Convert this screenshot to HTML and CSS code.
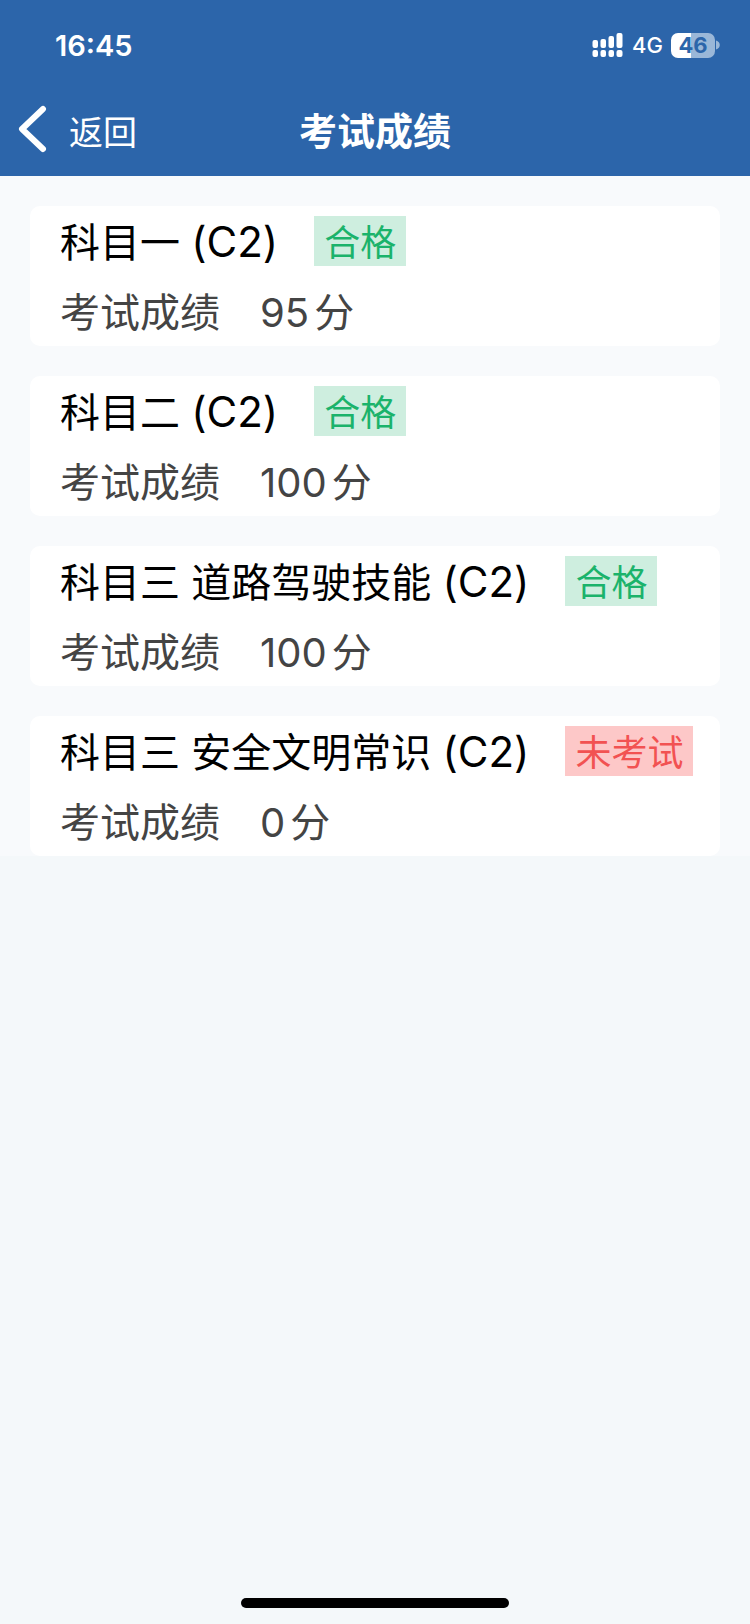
FILE: index.html
```
<!DOCTYPE html>
<html lang="zh-CN">
<head>
    <meta charset="UTF-8">
    <meta name="viewport" content="width=device-width, initial-scale=1.0">
    <title>考试成绩</title>
    <link rel="stylesheet" href="styles.css">
</head>
<body>

    <header class="header">
        <div class="status-bar">
            <span class="time">16:45</span>
            <div class="status-icons">
                <svg class="signal" width="32" height="26" viewBox="0 0 32 26" fill="#fff">
                    <rect x="0.5" y="8" width="5.500" height="8" rx="2"/>
                    <rect x="8.500" y="7" width="5.500" height="9" rx="2"/>
                    <rect x="16.500" y="4" width="5.500" height="12" rx="2"/>
                    <rect x="24.500" y="1" width="6" height="15" rx="2"/>
                    <rect x="0.5" y="18" width="5.500" height="7" rx="2"/>
                    <rect x="8.500" y="18" width="5.500" height="7" rx="2"/>
                    <rect x="16.500" y="18" width="5.500" height="7" rx="2"/>
                    <rect x="24.500" y="18" width="6" height="7" rx="2"/>
                </svg>
                <span class="network">4G</span>
                <div class="battery">
                    <span class="battery-level">46</span>
                    <svg width="4" height="10" viewBox="0 0 4 10" fill="#9ab7d8">
                        <path d="M0 0.5C5 2 5 8 0 9.5z"/>
                    </svg>
                </div>
            </div>
        </div>
        <nav class="nav-bar">
            <button class="back-button" type="button">
                <svg class="back-icon" width="30" height="48" viewBox="0 0 30 48" fill="none" stroke="#fff" stroke-width="6" stroke-linecap="round" stroke-linejoin="round">
                    <path d="M25 4L4 24L25 44"/>
                </svg>
                <span>返回</span>
            </button>
            <h1 class="title">考试成绩</h1>
        </nav>
    </header>

    <main class="score-list">
        <section class="card">
            <div class="card-head">
                <h2 class="subject">科目一 <span class="license">(C2)</span></h2>
                <span class="tag tag-pass">合格</span>
            </div>
            <p class="score"><span>考试成绩</span><span class="value"><span>95</span><span>分</span></span></p>
        </section>

        <section class="card">
            <div class="card-head">
                <h2 class="subject">科目二 <span class="license">(C2)</span></h2>
                <span class="tag tag-pass">合格</span>
            </div>
            <p class="score"><span>考试成绩</span><span class="value"><span>100</span><span>分</span></span></p>
        </section>

        <section class="card">
            <div class="card-head">
                <h2 class="subject">科目三 道路驾驶技能 <span class="license">(C2)</span></h2>
                <span class="tag tag-pass">合格</span>
            </div>
            <p class="score"><span>考试成绩</span><span class="value"><span>100</span><span>分</span></span></p>
        </section>

        <section class="card">
            <div class="card-head">
                <h2 class="subject">科目三 安全文明常识 <span class="license">(C2)</span></h2>
                <span class="tag tag-none">未考试</span>
            </div>
            <p class="score"><span>考试成绩</span><span class="value"><span>0</span><span>分</span></span></p>
        </section>
    </main>

    <div class="home-indicator"></div>

</body>
</html>
```

FILE: styles.css
```
* {
    box-sizing: border-box;
}
body {
    margin: 0;
    min-height: 100vh;
    display: flex;
    flex-direction: column;
    background-color: #f4f8fa;
    color: #000;
    font-family: Inter, "Noto Sans CJK SC", sans-serif;
}
.header {
    background-color: #2c65aa;
    color: #fff;
}

/* Status bar */
.status-bar {
    height: 90px;
    padding: 0 30px 0 55px;
    display: flex;
    align-items: center;
    justify-content: space-between;
}
.time {
    font-size: 29px;
    font-weight: 600;
}
.status-icons {
    display: flex;
    align-items: center;
    gap: 8px;
}
.network {
    font-size: 22px;
    font-weight: 500;
}
.battery {
    display: flex;
    align-items: center;
    gap: 1px;
}
.battery-level {
    width: 44px;
    height: 25px;
    border-radius: 7px;
    background: linear-gradient(to right, #fff 46%, #9ab7d8 46%);
    color: #2c65aa;
    font-size: 22px;
    font-weight: 700;
    line-height: 25px;
    text-align: center;
}

/* Navigation */
.nav-bar {
    height: 86px;
    padding: 0 18px;
    display: grid;
    grid-template-columns: 1fr auto 1fr;
    align-items: center;
}
.back-button {
    justify-self: start;
    display: flex;
    align-items: center;
    gap: 21px;
    padding: 0;
    border: none;
    background: none;
    color: #fff;
    font-family: inherit;
    font-size: 34px;
    line-height: 48px;
    cursor: pointer;
}
.back-icon {
    margin-bottom: 8px;
}
.title {
    margin: 0;
    padding-bottom: 4px;
    font-size: 38px;
    font-weight: 600;
    line-height: 48px;
}

/* Score cards */
.score-list {
    padding: 30px 30px 0;
    display: flex;
    flex-direction: column;
    gap: 30px;
    background-color: #f8fafc;
}
.card {
    padding: 10px 20px 8px 30px;
    border-radius: 10px;
    background-color: #fff;
}
.card-head {
    display: flex;
    align-items: center;
    gap: 36px;
}
.subject {
    margin: 0;
    padding-top: 4px;
    font-size: 40px;
    font-weight: 400;
    line-height: 46px;
}
.license {
    font-size: 42px;
    line-height: 40px;
}
.tag {
    padding: 4px 10px 0;
    font-size: 36px;
    line-height: 46px;
    white-space: nowrap;
}
.tag-pass {
    background-color: #ceeedf;
    color: #1bb36b;
}
.tag-none {
    background-color: #fdc8c8;
    color: #f25252;
}
.score {
    margin: 22px 0 0;
    display: flex;
    gap: 40px;
    color: #444;
    font-size: 40px;
    line-height: 50px;
}
.value {
    display: flex;
    gap: 5px;
}

.home-indicator {
    width: 268px;
    height: 10px;
    margin: auto auto 16px;
    border-radius: 5px;
    background-color: #000;
}
```
